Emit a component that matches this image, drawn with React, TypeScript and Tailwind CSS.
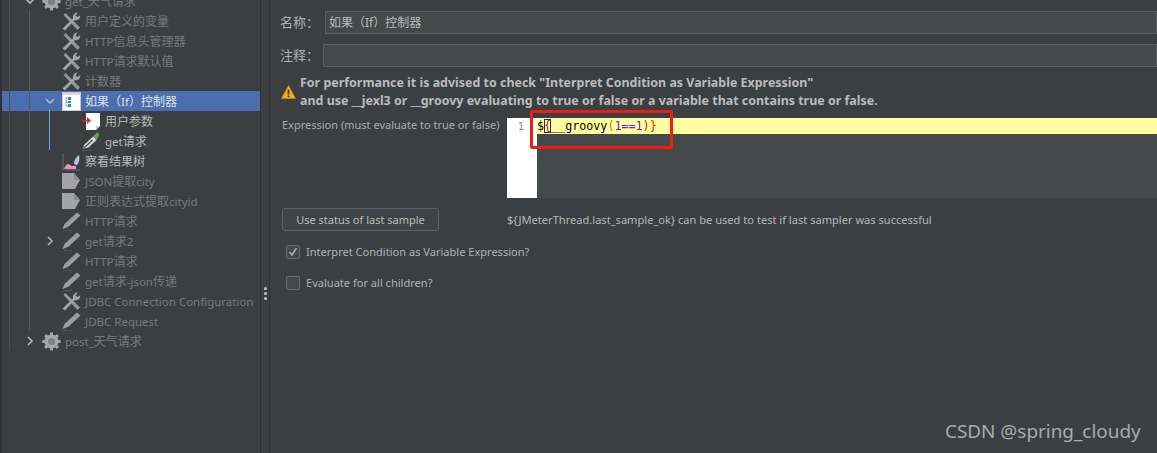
import type { ReactNode } from 'react';

const font = { fontFamily: '"Noto Sans", "Noto Sans CJK SC", sans-serif' };

function Wrench() {
  return (
    <svg width="19" height="19" viewBox="0 0 19 19" className="shrink-0">
      <path d="M1.5 3L3.5 1 18 15.5 15.5 18z" fill="#93979a" />
      <path d="M0.5 16.5L11 6.5c-.7-3 1.4-6 5-6l-2.4 2.8 1.6 1.8 3-1.9c.4 3.4-2.6 5.8-5.6 5L3 18.5z" fill="#a1a5a8" />
    </svg>
  );
}

function Gear() {
  return (
    <svg width="19" height="19" viewBox="0 0 19 19" className="shrink-0">
      <g fill="#a3a7aa">
        <circle cx="9.5" cy="9.5" r="7" />
        <rect x="8" y="0.5" width="3" height="18" />
        <rect x="0.5" y="8" width="18" height="3" />
        <rect x="8" y="0.5" width="3" height="18" transform="rotate(45 9.5 9.5)" />
        <rect x="8" y="0.5" width="3" height="18" transform="rotate(-45 9.5 9.5)" />
      </g>
      <circle cx="9.5" cy="9.5" r="3.6" fill="#7d8184" />
    </svg>
  );
}

function Pencil() {
  return (
    <svg width="19" height="19" viewBox="0 0 19 19" className="shrink-0">
      <path d="M0.5 17L2.5 12 15 0.5l3.5 3L6 15z" fill="#9a9ea1" />
      <path d="M0.5 18.5h10" stroke="#505356" strokeWidth="1" />
    </svg>
  );
}

function Dropper() {
  return (
    <svg width="19" height="19" viewBox="0 0 19 19" className="shrink-0">
      <path d="M0.5 17L2.5 12.5l8.5-8 3.5 3.5L6.5 15.5z" fill="#d5d8da" />
      <path d="M1.5 16.5l9-8.5" stroke="#4a4d50" strokeWidth="1.2" />
      <path d="M11 4.5l3.5-3.5c1.2-1 3.2.8 2.4 2.4L14.5 8z" fill="#65a84b" />
      <path d="M0.5 18.5h10" stroke="#505356" strokeWidth="1" />
    </svg>
  );
}

function Extractor() {
  return (
    <svg width="19" height="19" viewBox="0 0 19 19" className="shrink-0">
      <path d="M0 1h12l6 7-5 9H0z" fill="#a2a5a8" />
      <path d="M12 1l6 7h-6z" fill="#8a8d90" />
    </svg>
  );
}

function IfIcon() {
  return (
    <svg width="19" height="19" viewBox="0 0 19 19" className="shrink-0">
      <rect x="0.5" y="0.5" width="18" height="18" fill="#fff" stroke="#c9c9c9" />
      <rect x="1" y="1" width="17" height="2" fill="#d8d8d8" />
      <path d="M4 6v8M4 6h2M4 10h2M4 14h2" stroke="#8a9aa8" fill="none" />
      <rect x="6" y="5" width="3" height="3" fill="#2f83c8" />
      <rect x="6" y="9" width="3" height="2" fill="#2f83c8" />
      <rect x="6" y="12" width="3" height="3" fill="#2f83c8" />
    </svg>
  );
}

function PreProcessor() {
  return (
    <svg width="19" height="19" viewBox="0 0 19 19" className="shrink-0">
      <path d="M4 1h14v13l-4 4H4z" fill="#fff" />
      <path d="M14 18v-4h4z" fill="#c9c9c9" />
      <path d="M0 8.5h6" stroke="#e11d2a" strokeWidth="1.6" />
      <path d="M5 5l4 3.5L5 12z" fill="#c9313a" />
    </svg>
  );
}

function Listener() {
  return (
    <svg width="19" height="19" viewBox="0 0 19 19" className="shrink-0">
      <path d="M1 1v17h17" stroke="#6a6d70" fill="none" />
      <path d="M2 17c2-5 4-6 6-4s5 0 6 1v3z" fill="#ef8bc3" />
      <path d="M12 12c0-4 2-7 5-9 1 4 0 8-2 10z" fill="#a9c8ec" />
    </svg>
  );
}

function Chevron({ open }: { open?: boolean }) {
  return (
    <svg width="10" height="10" viewBox="0 0 10 10" className="shrink-0">
      <path d={open ? 'M1 3l4 4 4-4' : 'M3 1l4 4-4 4'} fill="none" stroke="#b4b8bb" strokeWidth="1.6" />
    </svg>
  );
}

// latin runs in the tree are a little narrower than the CJK ones
function Label({ text }: { text: string }) {
  return (
    <span className="ml-[4px] whitespace-nowrap pt-px">
      {text.split(/([\x00-\x7f]+)/).map((part, i) =>
        /^[\x00-\x7f]+$/.test(part) ? <span key={i} className="text-[11.5px]">{part}</span> : part,
      )}
    </span>
  );
}

type Row = { label: string; icon: ReactNode; pad: string; dim?: boolean; chevron?: 'open' | 'closed'; selected?: boolean };

const rows: Row[] = [
  { label: 'get_天气请求', icon: <Gear />, pad: 'pl-[23px]', dim: true, chevron: 'open' },
  { label: '用户定义的变量', icon: <Wrench />, pad: 'pl-[60px]', dim: true },
  { label: 'HTTP信息头管理器', icon: <Wrench />, pad: 'pl-[60px]', dim: true },
  { label: 'HTTP请求默认值', icon: <Wrench />, pad: 'pl-[60px]', dim: true },
  { label: '计数器', icon: <Wrench />, pad: 'pl-[60px]', dim: true },
  { label: '如果（If）控制器', icon: <IfIcon />, pad: 'pl-[43px]', chevron: 'open', selected: true },
  { label: '用户参数', icon: <PreProcessor />, pad: 'pl-[80px]' },
  { label: 'get请求', icon: <Dropper />, pad: 'pl-[80px]' },
  { label: '察看结果树', icon: <Listener />, pad: 'pl-[60px]' },
  { label: 'JSON提取city', icon: <Extractor />, pad: 'pl-[60px]', dim: true },
  { label: '正则表达式提取cityid', icon: <Extractor />, pad: 'pl-[60px]', dim: true },
  { label: 'HTTP请求', icon: <Pencil />, pad: 'pl-[60px]', dim: true },
  { label: 'get请求2', icon: <Pencil />, pad: 'pl-[43px]', dim: true, chevron: 'closed' },
  { label: 'HTTP请求', icon: <Pencil />, pad: 'pl-[60px]', dim: true },
  { label: 'get请求-json传递', icon: <Pencil />, pad: 'pl-[60px]', dim: true },
  { label: 'JDBC Connection Configuration', icon: <Wrench />, pad: 'pl-[60px]', dim: true },
  { label: 'JDBC Request', icon: <Pencil />, pad: 'pl-[60px]', dim: true },
  { label: 'post_天气请求', icon: <Gear />, pad: 'pl-[23px]', dim: true, chevron: 'closed' },
];

function Tree() {
  return (
    <div className="relative -mt-[9px] w-[258px] shrink-0">
      {rows.map((r, i) => (
        <div
          key={i}
          className={`flex h-5 items-center text-[12px] ${r.pad} ${r.selected ? 'bg-[#4b6eaf] text-[#dfe2e5]' : r.dim ? 'text-[#777a7d]' : 'text-[#bbbbbb]'}`}
        >
          {r.chevron && (
            <span className="mr-[7px]">
              <Chevron open={r.chevron === 'open'} />
            </span>
          )}
          {r.icon}
          <Label text={r.label} />
        </div>
      ))}
      <div className="absolute left-[7px] top-0 h-[359px] w-px bg-[#4b4f52]" />
      <div className="absolute left-[27px] top-[19px] h-[320px] w-px bg-[#56595c]" />
      <div className="absolute left-[47px] top-[119px] h-[40px] w-px bg-[#6fa8dc]" />
    </div>
  );
}

function Check({ checked }: { checked?: boolean }) {
  return (
    <span className="flex h-[14px] w-[14px] items-center justify-center rounded-[2px] border border-[#6b6b6b] bg-[#45494a]">
      {checked && (
        <svg width="10" height="10" viewBox="0 0 10 10">
          <path d="M1.5 5l2.5 3 4.5-7" fill="none" stroke="#a9a9a9" strokeWidth="1.6" />
        </svg>
      )}
    </span>
  );
}

function Detail() {
  return (
    <div className="min-w-0 flex-1 pl-[10px] pt-[11px] text-[12px] text-[#bbbbbb]">
      <div className="flex h-[23px] items-center">
        <span className="w-[45px] shrink-0 text-[13px] text-[#b0b3b5]">名称：</span>
        <div className="flex h-[23px] flex-1 items-center border border-[#5c5f61] bg-[#45494a] pl-[3px] text-[#bbbbbb]">
          如果（If）控制器
        </div>
      </div>
      <div className="mt-[10px] flex h-[23px] items-center">
        <span className="w-[43px] shrink-0 text-[13px] text-[#b0b3b5]">注释：</span>
        <div className="h-[23px] flex-1 border border-[#5c5f61] bg-[#45494a]" />
      </div>
      <div className="mt-[7px] flex items-center">
        <svg width="15" height="14" viewBox="0 0 15 14" className="ml-[1px] shrink-0">
          <path d="M7.5 0.5L14.5 13.5H0.5z" fill="#f2b01e" stroke="#c98f10" strokeWidth="0.6" />
          <rect x="6.6" y="4.5" width="1.8" height="5" fill="#3c3f41" />
          <rect x="6.6" y="10.5" width="1.8" height="1.8" fill="#3c3f41" />
        </svg>
        <div className="ml-[4px] text-[12.45px] font-bold leading-[18px] text-[#bbbbbb]">
          <div>For performance it is advised to check "Interpret Condition as Variable Expression"</div>
          <div>and use __jexl3 or __groovy evaluating to true or false or a variable that contains true or false.</div>
        </div>
      </div>
      <div className="mt-[8px] flex pl-[2px]">
        <div className="w-[225px] shrink-0 whitespace-nowrap text-[11px] leading-[13px] text-[#a9acae]">Expression (must evaluate to true or false)</div>
        <div className="flex h-[80px] flex-1 bg-[#45494a]">
          <div className="w-[30px] shrink-0 bg-white pr-[13px] text-right font-['DejaVu_Sans_Mono'] text-[10.5px] leading-[16px] text-[#8a8a8a]">1</div>
          <div className="h-4 flex-1 bg-[#ffff9f] font-['DejaVu_Sans_Mono'] text-[11.7px] leading-[16px] text-black">
            <span>$</span>
            <span className="text-[#e02020] outline outline-1 -outline-offset-1 outline-[#1c2a8c]">{'{'}</span>
            <span>__groovy</span>
            <span className="text-[#e07020]">(</span>
            <span className="text-[#7020d0]">1==1</span>
            <span className="text-[#e02020]">)</span>
            <span className="text-[#f02020]">{'}'}</span>
          </div>
        </div>
      </div>
      <div className="mt-[10px] flex items-center pl-[2px]">
        <button className="flex h-[23px] w-[157px] shrink-0 items-center justify-center rounded-[3px] border border-[#5e6163] bg-[#3f4345] pt-px text-[11px] text-[#bbbbbb]">
          Use status of last sample
        </button>
        <span className="ml-[68px] whitespace-nowrap pt-px text-[11.08px] text-[#b4b7b9]">{'${JMeterThread.last_sample_ok} can be used to test if last sampler was successful'}</span>
      </div>
      <label className="ml-[6px] mt-[13px] flex h-[15px] items-center gap-[6px] text-[11.06px] text-[#b0b3b5]">
        <Check checked />
        <span className="pt-px">Interpret Condition as Variable Expression?</span>
      </label>
      <label className="ml-[6px] mt-[16px] flex h-[15px] items-center gap-[6px] text-[11.06px] text-[#b0b3b5]">
        <Check />
        <span className="pt-px">Evaluate for all children?</span>
      </label>
    </div>
  );
}

export default function App() {
  return (
    <div className="relative flex h-[453px] w-[1157px] overflow-hidden bg-[#3c3f41]" style={font}>
      <div className="w-[2px] shrink-0 bg-[#2f3133]" />
      <div className="flex shrink-0 items-start">
        <Tree />
      </div>
      <div className="flex w-[10px] shrink-0 items-center justify-center border-x border-[#2f3133]">
        <span className="mt-[134px] flex flex-col gap-[2px]">
          <i className="block h-[3px] w-[3px] rounded-full bg-[#c8c8c8]" />
          <i className="block h-[3px] w-[3px] rounded-full bg-[#c8c8c8]" />
          <i className="block h-[3px] w-[3px] rounded-full bg-[#c8c8c8]" />
        </span>
      </div>
      <Detail />
      <div className="absolute left-[530px] top-[110px] h-[39px] w-[143px] rounded-[2px] border-[3px] border-[#f21c14]" />
      <div className="absolute left-[945px] top-[418px] text-[18.9px] leading-[26px] text-[#a8abad]">CSDN @spring_cloudy</div>
    </div>
  );
}
